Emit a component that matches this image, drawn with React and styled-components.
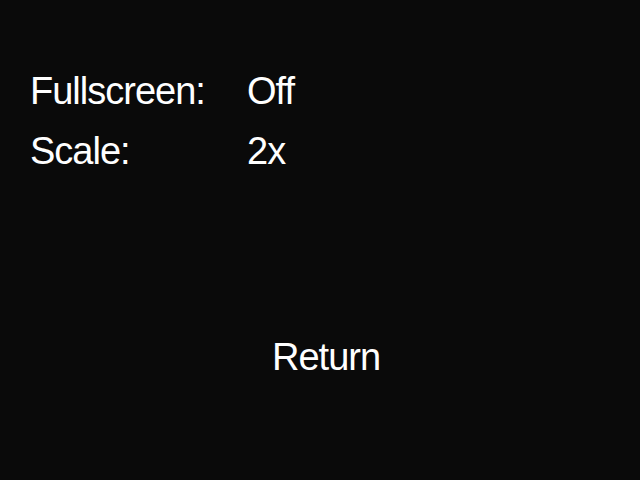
import { Fragment } from "react";
import styled, { createGlobalStyle } from "styled-components";

const GlobalStyle = createGlobalStyle`
  html, body {
    margin: 0;
    padding: 0;
    background: #0a0a0a;
  }
`;

const Screen = styled.div`
  width: 640px;
  height: 480px;
  background: #0a0a0a;
  color: #ffffff;
  font-family: "Liberation Sans", Arial, sans-serif;
  font-size: 38px;
  line-height: 60px;
  display: flex;
  flex-direction: column;
  padding-top: 61px;
  box-sizing: border-box;
`;

const Options = styled.div`
  display: grid;
  grid-template-columns: 217px auto;
  padding-left: 30px;
`;

const Label = styled.div`
  letter-spacing: -1px;
`;

const Value = styled.div`
  letter-spacing: -1px;
`;

const ReturnButton = styled.div`
  margin-top: 146px;
  padding-left: 272px;
  letter-spacing: -1px;
`;

const options = [
  { label: "Fullscreen:", value: "Off" },
  { label: "Scale:", value: "2x" },
];

const App = () => {
  return (
    <>
      <GlobalStyle />
      <Screen>
        <Options>
          {options.map((o) => (
            <Fragment key={o.label}>
              <Label>{o.label}</Label>
              <Value>{o.value}</Value>
            </Fragment>
          ))}
        </Options>
        <ReturnButton>Return</ReturnButton>
      </Screen>
    </>
  );
};

export default App;
